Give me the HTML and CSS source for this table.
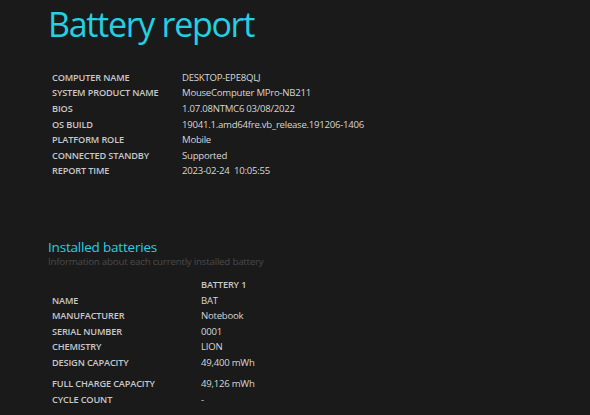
FILE: index.html
```html
<!DOCTYPE html>
<html>
<head>
<meta charset="utf-8">
<link rel="stylesheet" href="styles.css">
</head>
<body>
<div class="page">
  <h1 class="title">Battery report</h1>
  <table class="info">
    <tr><td class="label">COMPUTER NAME</td><td class="value">DESKTOP-EPE8QLJ</td></tr>
    <tr><td class="label">SYSTEM PRODUCT NAME</td><td class="value">MouseComputer MPro-NB211</td></tr>
    <tr><td class="label">BIOS</td><td class="value">1.07.08NTMC6 03/08/2022</td></tr>
    <tr><td class="label">OS BUILD</td><td class="value">19041.1.amd64fre.vb_release.191206-1406</td></tr>
    <tr><td class="label">PLATFORM ROLE</td><td class="value">Mobile</td></tr>
    <tr><td class="label">CONNECTED STANDBY</td><td class="value">Supported</td></tr>
    <tr><td class="label">REPORT TIME</td><td class="value">2023-02-24&nbsp;&nbsp;10:05:55</td></tr>
  </table>

  <h2 class="section">Installed batteries</h2>
  <div class="subtitle">Information about each currently installed battery</div>
  <table class="batt">
    <tr><td class="label"></td><td class="label head">BATTERY 1</td></tr>
    <tr><td class="label">NAME</td><td class="value">BAT</td></tr>
    <tr><td class="label">MANUFACTURER</td><td class="value">Notebook</td></tr>
    <tr><td class="label">SERIAL NUMBER</td><td class="value">0001</td></tr>
    <tr><td class="label">CHEMISTRY</td><td class="value">LION</td></tr>
    <tr><td class="label">DESIGN CAPACITY</td><td class="value">49,400 mWh</td></tr>
    <tr class="spaced"><td class="label">FULL CHARGE CAPACITY</td><td class="value">49,126 mWh</td></tr>
    <tr><td class="label">CYCLE COUNT</td><td class="value">-</td></tr>
  </table>
</div>
</body>
</html>
```

FILE: styles.css
```css
html, body {
  margin: 0;
  padding: 0;
  background: #1a1a1a;
  height: 100%;
  overflow: hidden;
}
body {
  font-family: "Open Sans", "Noto Sans", sans-serif;
  color: #d8d8d8;
}
.page {
  padding: 0 0 0 48px;
}
.title {
  margin: 0;
  font-weight: 400;
  font-size: 34px;
  line-height: 48px;
  color: #24d0e2;
  letter-spacing: -1.3px;
}
.info, .batt {
  border-collapse: collapse;
  margin-left: 4px;
}
.info {
  margin-top: 22px;
}
td {
  padding: 0;
  height: 15.6px;
  line-height: 12px;
  vertical-align: middle;
  white-space: nowrap;
}
.label {
  font-size: 9.2px;
  font-weight: 600;
  color: #c8c8c8;
  letter-spacing: -0.15px;
}
.value {
  font-size: 9.6px;
  color: #d6d6d6;
  letter-spacing: -0.25px;
}
.info .label { width: 130px; }
.batt .label:first-child { width: 149px; }
.section {
  margin: 60px 0 0 0;
  font-weight: 400;
  font-size: 13.5px;
  line-height: 16px;
  color: #24d0e2;
  letter-spacing: -0.2px;
}
.subtitle {
  font-size: 9.8px;
  line-height: 14px;
  color: #4a4a4a;
  letter-spacing: -0.25px;
}
.batt {
  margin-top: 8px;
}
.spaced td { padding-top: 5.4px; }
```
